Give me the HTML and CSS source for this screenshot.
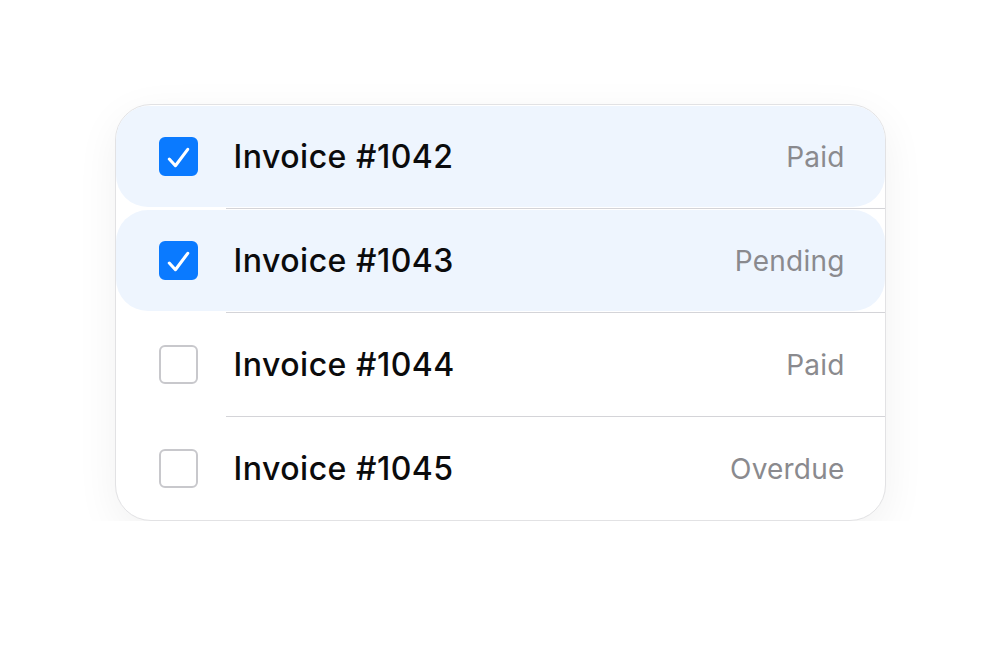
FILE: index.html
```html
<!DOCTYPE html>
<html lang="en">
<head>
    <meta charset="UTF-8">
    <meta name="viewport" content="width=device-width, initial-scale=1.0">
    <title>Invoices</title>
    <link rel="stylesheet" href="styles.css">
</head>
<body>
    <div class="card">
        <div class="item">
            <div class="row checked">
                <span class="box"><svg viewBox="0 0 38 38"><path d="M10 21.5 L16 28 L28 12"/></svg></span>
                <span class="name">Invoice #1042</span>
                <span class="status">Paid</span>
            </div>
        </div>
        <div class="divider"></div>
        <div class="item">
            <div class="row checked">
                <span class="box"><svg viewBox="0 0 38 38"><path d="M10 21.5 L16 28 L28 12"/></svg></span>
                <span class="name">Invoice #1043</span>
                <span class="status">Pending</span>
            </div>
        </div>
        <div class="divider"></div>
        <div class="item">
            <div class="row">
                <span class="box"></span>
                <span class="name">Invoice #1044</span>
                <span class="status">Paid</span>
            </div>
        </div>
        <div class="divider"></div>
        <div class="item">
            <div class="row">
                <span class="box"></span>
                <span class="name">Invoice #1045</span>
                <span class="status">Overdue</span>
            </div>
        </div>
    </div>
</body>
</html>
```

FILE: styles.css
```css
body {
    margin: 0;
    background-color: #fff;
    font-family: Inter, "Noto Sans", sans-serif;
}
.card {
    width: 769px;
    margin: 104px auto 0;
    border: 1.5px solid #e2e2e4;
    border-radius: 36px;
    background-color: #fff;
    box-shadow: 0 12px 44px rgba(0, 0, 0, 0.06);
    overflow: hidden;
}
.item {
    padding: 1px 0;
}
.row {
    display: flex;
    align-items: center;
    height: 101px;
    padding: 0 40px 0 43px;
    border-radius: 32px;
}
.row.checked {
    background-color: #eef5fe;
}
.box {
    width: 35px;
    height: 35px;
    border: 2px solid #c8c8cc;
    border-radius: 6px;
    flex-shrink: 0;
}
.row.checked .box {
    border-color: #0a7aff;
    background-color: #0a7aff;
}
.box svg {
    display: block;
    width: 39px;
    height: 39px;
    margin: -2px;
}
.box path {
    fill: none;
    stroke: #fff;
    stroke-width: 3;
    stroke-linecap: round;
    stroke-linejoin: round;
}
.name {
    margin-left: 36px;
    font-size: 32px;
    font-weight: 500;
    letter-spacing: 0.5px;
    color: #0b0b0c;
    flex: 1;
}
.status {
    font-size: 28px;
    color: #8a8a8e;
    letter-spacing: 0.2px;
}
.divider {
    height: 1px;
    margin-left: 110px;
    background-color: #d4d4d8;
}
```
